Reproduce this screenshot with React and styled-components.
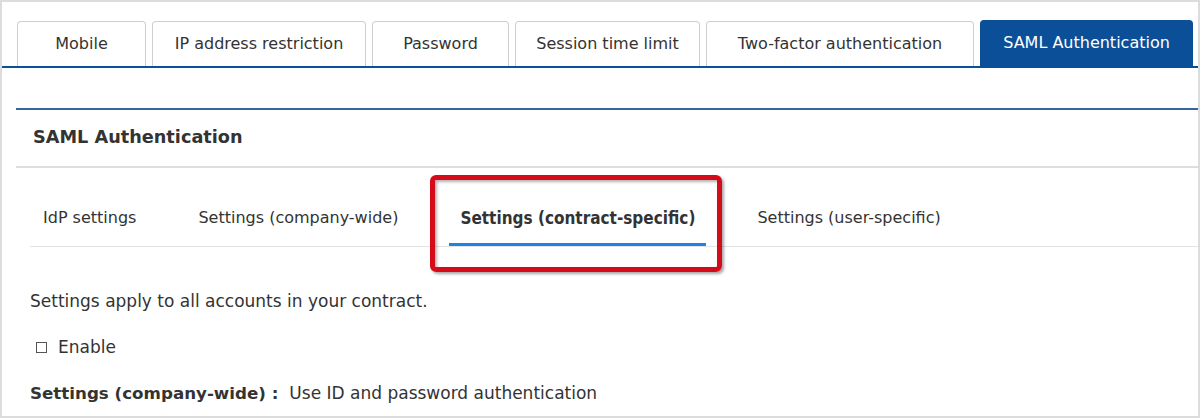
import React from "react";
import styled, { createGlobalStyle } from "styled-components";

const Global = createGlobalStyle`
  html, body { margin: 0; padding: 0; background: #fff; }
  body { font-family: "DejaVu Sans", Verdana, sans-serif; color: #333; }
  * { box-sizing: border-box; }
`;

const Frame = styled.div`
  width: 1200px;
  height: 418px;
  border: 2px solid #dcdcdc;
  background: #fff;
  overflow: hidden;
`;

const TabBar = styled.div`
  display: flex;
  align-items: flex-end;
  gap: 6px;
  padding: 19px 0 0 15px;
  height: 66px;
  border-bottom: 2px solid #0b4f98;
`;

const Tab = styled.div`
  width: ${(p) => p.$w}px;
  height: ${(p) => (p.$active ? 46 : 45)}px;
  display: flex;
  align-items: center;
  justify-content: center;
  font-size: 16px;
  border: 1px solid ${(p) => (p.$active ? "#0b4f98" : "#cfcfcf")};
  border-bottom: none;
  border-radius: 4px 4px 0 0;
  background: ${(p) => (p.$active ? "#0b4f98" : "#fff")};
  color: ${(p) => (p.$active ? "#fff" : "#333")};
  padding-bottom: 2px;
`;

const Panel = styled.div`
  margin: 40px 0 0 14px;
  border-top: 2px solid #3566a0;
`;

const Heading = styled.h2`
  margin: 0;
  height: 58px;
  display: flex;
  align-items: center;
  padding: 0 0 3px 17px;
  font-size: 17.7px;
  font-weight: bold;
  color: #333;
  border-bottom: 2px solid #dedede;
`;

const SubNav = styled.div`
  display: flex;
  gap: 40px;
  margin-left: 14px;
  padding-left: 2px;
  border-bottom: 1px solid #e3e3e3;
`;

const SubTab = styled.div`
  position: relative;
  height: 78px;
  padding: 40px 11px 0;
  font-family: ${(p) => (p.$active ? '"DejaVu Sans Condensed", "DejaVu Sans", sans-serif' : '"DejaVu Sans", sans-serif')};
  font-size: ${(p) => (p.$active ? 17 : 16)}px;
  line-height: 20px;
  font-weight: ${(p) => (p.$active ? "bold" : "normal")};
  color: #333;
  border-bottom: 3px solid ${(p) => (p.$active ? "#1d84e3" : "transparent")};
  white-space: nowrap;
`;

const Highlight = styled.div`
  position: absolute;
  left: -19px;
  top: 7px;
  width: 292px;
  height: 97px;
  border: 5px solid #d60b1a;
  border-radius: 6px;
  box-shadow: 2px 2px 3px rgba(0, 0, 0, 0.35), inset 2px 2px 3px rgba(0, 0, 0, 0.3);
  pointer-events: none;
`;

const Body = styled.div`
  padding: 44px 0 0 14px;
  display: flex;
  flex-direction: column;
  gap: 26px;
  font-size: 17px;
  line-height: 20px;
`;

const Line = styled.div`
  display: flex;
  align-items: center;
`;

const CheckBox = styled.span`
  display: inline-block;
  width: 11px;
  height: 11px;
  border: 1px solid #555;
  margin: 0 11px 0 6px;
`;

const Label = styled.span`
  font-weight: bold;
  font-size: 16.7px;
  margin-right: 11px;
`;

const tabs = [
  ["Mobile", 129],
  ["IP address restriction", 214],
  ["Password", 137],
  ["Session time limit", 185],
  ["Two-factor authentication", 268],
  ["SAML Authentication", 213, true],
];

const subTabs = [
  ["IdP settings"],
  ["Settings (company-wide)"],
  ["Settings (contract-specific)", true],
  ["Settings (user-specific)"],
];

export default function App() {
  return (
    <>
      <Global />
      <Frame>
        <TabBar>
          {tabs.map(([t, w, a]) => (
            <Tab key={t} $w={w} $active={a}>
              {t}
            </Tab>
          ))}
        </TabBar>
        <Panel>
          <Heading>SAML Authentication</Heading>
          <SubNav>
            {subTabs.map(([t, a]) => (
              <SubTab key={t} $active={a}>
                {t}
                {a && <Highlight />}
              </SubTab>
            ))}
          </SubNav>
          <Body>
            <Line>Settings apply to all accounts in your contract.</Line>
            <Line>
              <CheckBox />
              Enable
            </Line>
            <Line>
              <Label>Settings (company-wide) :</Label>
              Use ID and password authentication
            </Line>
          </Body>
        </Panel>
      </Frame>
    </>
  );
}
